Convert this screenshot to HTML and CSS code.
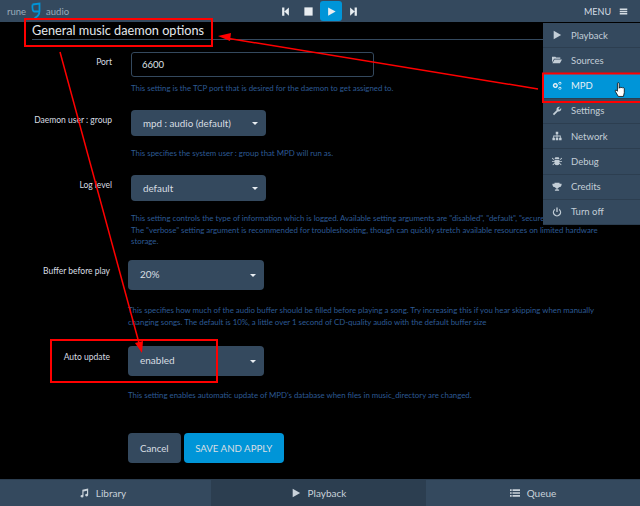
FILE: index.html
```html
<!DOCTYPE html>
<html lang="en">
<head>
    <meta charset="UTF-8">
    <meta name="viewport" content="width=device-width, initial-scale=1.0">
    <title>RuneAudio - MPD</title>
    <link rel="stylesheet" href="styles.css">
</head>
<body>

<!-- Top bar -->
<header class="topbar">
    <div class="logo">
        <span>rune</span>
        <svg class="logo-mark" viewBox="0 0 12 18"><path d="M2.500 2.500 L9.500 1.500 L9.500 9 Q9.500 14 4.500 16 M2.500 2.500 Q2 8.500 4 9.500 L9 9.500" fill="none" stroke="#0095d8" stroke-width="1.800"/></svg>
        <span>audio</span>
    </div>
    <div class="transport">
        <button class="transport-btn"><svg viewBox="0 0 12 12"><path d="M1.500 .5h3v11h-3zM4.500 6l6-5.500v11z"/></svg></button>
        <button class="transport-btn"><svg viewBox="0 0 12 12"><path d="M.5 .5h11v11H.5z"/></svg></button>
        <button class="transport-btn transport-play"><svg viewBox="0 0 12 12"><path d="M1.500 .5l10 5.500-10 5.500z"/></svg></button>
        <button class="transport-btn"><svg viewBox="0 0 12 12"><path d="M7.500 .5h3v11h-3zM7.500 6l-6-5.500v11z"/></svg></button>
    </div>
    <div class="menu-toggle">
        <span>MENU</span>
        <svg viewBox="0 0 12 12"><path d="M1 2h10v2H1zM1 5h10v2H1zM1 8h10v2H1z"/></svg>
    </div>
</header>

<!-- Settings form -->
<main class="content">
    <h2 class="section-title">General music daemon options</h2>

    <div class="field field-port">
        <label>Port</label>
        <div>
            <input class="text-input" type="text" value="6600">
            <p class="help">This setting is the TCP port that is desired for the daemon to get assigned to.</p>
        </div>
    </div>

    <div class="field field-user">
        <label>Daemon user : group</label>
        <div>
            <div class="select">mpd : audio (default)<i class="caret"></i></div>
            <p class="help">This specifies the system user : group that MPD will run as.</p>
        </div>
    </div>

    <div class="field field-log">
        <label>Log level</label>
        <div>
            <div class="select">default<i class="caret"></i></div>
            <p class="help">This setting controls the type of information which is logged. Available setting arguments are "disabled", "default", "secure", and "verbose".<br>The "verbose" setting argument is recommended for troubleshooting, though can quickly stretch available resources on limited hardware<br>storage.</p>
        </div>
    </div>

    <div class="field field-wide field-buffer">
        <label>Buffer before play</label>
        <div>
            <div class="select select-large">20%<i class="caret"></i></div>
            <p class="help help-large">This specifies how much of the audio buffer should be filled before playing a song. Try increasing this if you hear skipping when manually<br>changing songs. The default is 10%, a little over 1 second of CD-quality audio with the default buffer size</p>
        </div>
    </div>

    <div class="field field-wide field-auto">
        <label>Auto update</label>
        <div>
            <div class="select select-large">enabled<i class="caret"></i></div>
            <p class="help">This setting enables automatic update of MPD's database when files in music_directory are changed.</p>
        </div>
    </div>

    <div class="actions">
        <button class="btn">Cancel</button>
        <button class="btn btn-primary">SAVE AND APPLY</button>
    </div>

    <h2 class="section-title section-next">Mixer options</h2>
</main>

<!-- Bottom tabs -->
<footer class="tabs">
    <a class="tab tab-library" href="#"><svg viewBox="0 0 12 12"><path d="M4 2l7-1.500v8a1.800 1.500 0 1 1-1.400-1.400V3.200L5.400 4.100v5.700a1.800 1.500 0 1 1-1.400-1.400z"/></svg>Library</a>
    <a class="tab tab-active" href="#"><svg viewBox="0 0 12 12"><path d="M2 1l9 5-9 5z"/></svg>Playback</a>
    <a class="tab" href="#"><svg viewBox="0 0 12 12"><path d="M0 1.500h2v2H0zM3 1.500h9v2H3zM0 5h2v2H0zM3 5h9v2H3zM0 8.500h2v2H0zM3 8.500h9v2H3z"/></svg>Queue</a>
</footer>

<!-- Dropdown menu -->
<nav class="menu">
    <a href="#"><svg viewBox="0 0 12 12"><path d="M2 1l9 5-9 5z"/></svg>Playback</a>
    <a href="#"><svg viewBox="0 0 12 12"><path d="M0 2h4l1 1h5v1.500H2.500L0 9zM3 5.500h9L9.500 10H0.500z"/></svg>Sources</a>
    <a class="active" href="#"><svg viewBox="0 0 12 12"><path fill-rule="evenodd" d="M4 2.500a3 3 0 1 0 .01 0zM4 4.300a1.200 1.200 0 1 1-.01 0zM9.500 1a1.800 1.800 0 1 0 .01 0zM9.500 2a.8.8 0 1 1-.01 0zM9.500 7a1.800 1.800 0 1 0 .01 0zM9.500 8a.8.8 0 1 1-.01 0z"/></svg>MPD</a>
    <a href="#"><svg viewBox="0 0 12 12"><path d="M11 2.500L9 4.500 7.500 3.500 9.500 1A3.200 3.200 0 0 0 5.500 5L1 9.500 2.500 11 7 6.500A3.200 3.200 0 0 0 11 2.500z"/></svg>Settings</a>
    <a href="#"><svg viewBox="0 0 12 12"><path d="M4.500 1h3v3h-1v1.500h4V8h1v3h-3V8h1V6.500h-3V8h1v3h-3V8h1V6.500h-3V8h1v3h-3V8h1V5.500h4V4h-1z"/></svg>Network</a>
    <a href="#"><svg viewBox="0 0 12 12"><path d="M4 1.500h4L9 3.500H3zM3 4.500h6V8a3 3 0 0 1-6 0zM0.500 2l2 2-.7.700-2-2zM11.500 2l-2 2 .7.700 2-2zM0 6h3v1H0zM9 6h3v1H9zM0.500 10.500l2-2 .7.700-2 2zM11.500 10.500l-2-2-.7.700 2 2z"/></svg>Debug</a>
    <a href="#"><svg viewBox="0 0 12 12"><path d="M3 1h6v1h2.500v1.500Q11 6 8.500 6.300 7.500 7.500 6.700 7.600V9H8.500v1.500h-5V9h1.800V7.600Q4.500 7.500 3.500 6.300 1 6 .5 3.500V2H3z"/></svg>Credits</a>
    <a href="#"><svg viewBox="0 0 12 12"><path d="M5.200 .5h1.600v5.500H5.200zM3.500 2.200v1.700a3.500 3.500 0 1 0 5 0V2.200a5 5 0 1 1-5 0z"/></svg>Turn off</a>
</nav>

<!-- Hand pointer over the MPD item -->
<svg class="cursor" viewBox="0 0 14 18"><path d="M4 1.500a1 1 0 0 1 2 0V7l.5-1a1 1 0 0 1 1.500.5l.5-.3a1 1 0 0 1 1.500.5l.5-.2a1 1 0 0 1 1.500 1V12l-1 4.500H5L1.500 10.500Q1 9 2.500 9L4 10.500z" fill="#fff" stroke="#000" stroke-width=".9"/></svg>

<!-- Red annotations drawn on the picture -->
<svg class="annotations" viewBox="0 0 640 506">
    <g fill="none" stroke="#f00" stroke-width="2">
        <rect x="25" y="19" width="187" height="27"/>
        <rect x="543" y="73.500" width="100" height="28.500"/>
        <rect x="51" y="340" width="166" height="42"/>
    </g>
    <g stroke="#f00" stroke-width="1.500">
        <line x1="538" y1="89" x2="226" y2="38"/>
        <line x1="60" y1="52" x2="139" y2="343"/>
    </g>
    <g fill="#f00">
        <path d="M218 36l13-3-1 8z"/>
        <path d="M142 353l-7-10 8-2z"/>
    </g>
</svg>

</body>
</html>
```

FILE: styles.css
```css
html, body {
    height: 100%;
}
body {
    display: flex;
    flex-direction: column;
    height: 506px;
    margin: 0;
    overflow: hidden;
    position: relative;
    background-color: #000;
    color: #fff;
    font-family: 'Lato', sans-serif;
    font-size: 10px;
}
svg {
    fill: currentColor;
}

/* Top bar */
.topbar {
    flex: none;
    display: flex;
    align-items: center;
    justify-content: space-between;
    height: 22px;
    padding: 0 12px 0 7px;
    background-color: #34495e;
    position: relative;
}
.logo {
    display: flex;
    align-items: center;
    gap: 4px;
    width: 100px;
    color: #9aabba;
    font-size: 9.500px;
}
.logo-mark {
    width: 12px;
    height: 18px;
}
.transport {
    position: absolute;
    left: 274px;
    top: 0;
    display: flex;
    align-items: center;
    height: 22px;
}
.transport-btn {
    display: flex;
    align-items: center;
    justify-content: center;
    width: 23px;
    height: 20px;
    padding: 0;
    border: none;
    border-radius: 3px;
    background: none;
    color: #e8edf1;
}
.transport-btn svg {
    width: 9px;
    height: 9px;
}
.transport-play {
    width: 22px;
    background-color: #0095d8;
}
.menu-toggle {
    display: flex;
    align-items: center;
    gap: 8px;
    color: #d5dde4;
    font-size: 9px;
}
.menu-toggle svg {
    width: 9px;
    height: 9px;
}

/* Form */
.content {
    flex: 1;
    min-height: 0;
    overflow: hidden;
    padding: 0 0 0 32px;
}
.section-title {
    margin: 0 0 12px;
    padding: 1px 0 2px;
    border-bottom: 1px solid #34495e;
    font-size: 12.700px;
    font-weight: 400;
    line-height: 14px;
    color: #e4e8ec;
}
.section-next {
    margin-top: 13px;
}
.field {
    display: grid;
    grid-template-columns: 80px 1fr;
    column-gap: 19px;
    align-items: start;
}
.field label {
    padding-top: 4px;
    text-align: right;
    white-space: nowrap;
    font-size: 8.500px;
    line-height: 12px;
    color: #d8dde2;
}
.field-wide {
    grid-template-columns: 78px 1fr;
    column-gap: 18px;
}
.field-wide label {
    padding-top: 5px;
}
.field-user, .field-log {
    margin-top: 15.500px;
}
.field-buffer {
    margin-top: 12.500px;
}
.field-auto {
    margin-top: 17px;
}
.text-input {
    display: block;
    box-sizing: border-box;
    width: 243px;
    height: 25px;
    padding: 0 10px;
    background: #000;
    border: 1px solid #34495e;
    border-radius: 3px;
    color: #dfe4e8;
    font-family: inherit;
    font-size: 9.500px;
}
.select {
    position: relative;
    box-sizing: border-box;
    width: 135px;
    height: 26px;
    padding: 0 12px;
    border-radius: 4px;
    background-color: #34495e;
    color: #d8dee3;
    font-size: 9.800px;
    line-height: 26px;
}
.select-large {
    width: 136px;
    height: 30px;
    font-size: 10px;
    line-height: 29px;
}
.caret {
    position: absolute;
    right: 8px;
    top: 50%;
    margin-top: -1px;
    border-left: 3px solid transparent;
    border-right: 3px solid transparent;
    border-top: 3px solid #e8edf1;
}
.help {
    margin: 12px 0 0;
    color: #2d5a94;
    font-size: 7.850px;
    line-height: 11.500px;
    white-space: nowrap;
}
.field-port .help {
    margin-top: 6px;
}
.help-large {
    line-height: 12.700px;
    margin-top: 13.500px;
}
.field-auto .help {
    margin-top: 14px;
}
.actions {
    display: flex;
    gap: 3px;
    margin: 31.500px 0 0 96px;
}
.btn {
    height: 30px;
    padding: 0 12px;
    border: none;
    border-radius: 4px;
    background-color: #34495e;
    color: #d8dee3;
    font-family: inherit;
    font-size: 9.700px;
}
.btn-primary {
    padding: 0 11.500px;
    background-color: #0095d8;
}

/* Bottom tabs */
.tabs {
    flex: none;
    display: grid;
    grid-template-columns: 211px 215px 214px;
    height: 27px;
    background-color: #34495e;
    border-top: 1px solid #2c3e50;
    box-sizing: border-box;
}
.tab {
    display: flex;
    align-items: center;
    justify-content: center;
    gap: 7px;
    color: #c9d2da;
    font-size: 10px;
    text-decoration: none;
}
.tab svg {
    width: 10px;
    height: 10px;
}
.tab-library {
    padding-right: 6px;
}
.tab-active {
    background-color: #2c3e50;
}

/* Dropdown */
.menu {
    position: absolute;
    top: 23px;
    right: 0;
    width: 97px;
    background-color: #34495e;
}
.menu a {
    display: flex;
    align-items: center;
    gap: 9px;
    box-sizing: border-box;
    height: 25.250px;
    padding-left: 9px;
    border-bottom: 1px solid #2c3e50;
    color: #c3ced7;
    font-size: 9.500px;
    text-decoration: none;
}
.menu a svg {
    width: 10px;
    height: 10px;
}
.menu a.active {
    background-color: #0095d8;
    color: #e6f0f6;
}

.cursor {
    position: absolute;
    left: 614px;
    top: 82px;
    width: 12px;
    height: 16px;
}
.annotations {
    position: absolute;
    left: 0;
    top: 0;
    width: 640px;
    height: 506px;
    pointer-events: none;
}
```
